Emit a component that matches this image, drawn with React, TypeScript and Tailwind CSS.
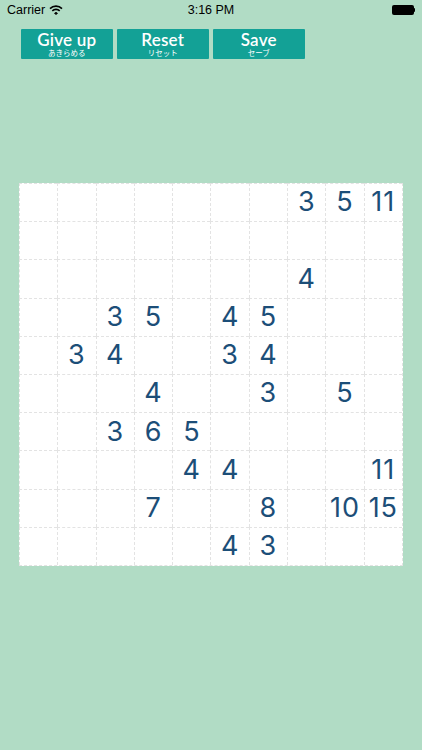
import React from "react";

const board: (number | null)[][] = [
  [null, null, null, null, null, null, null, 3, 5, 11],
  [null, null, null, null, null, null, null, null, null, null],
  [null, null, null, null, null, null, null, 4, null, null],
  [null, null, 3, 5, null, 4, 5, null, null, null],
  [null, 3, 4, null, null, 3, 4, null, null, null],
  [null, null, null, 4, null, null, 3, null, 5, null],
  [null, null, 3, 6, 5, null, null, null, null, null],
  [null, null, null, null, 4, 4, null, null, null, 11],
  [null, null, null, 7, null, null, 8, null, 10, 15],
  [null, null, null, null, null, 4, 3, null, null, null],
];

const buttons = [
  { label: "Give up", sub: "あきらめる" },
  { label: "Reset", sub: "リセット" },
  { label: "Save", sub: "セーブ" },
];

function StatusBar() {
  return (
    <div className="relative flex h-[20px] items-center px-[7px] text-[12.5px] text-black">
      <div className="flex items-center gap-[4px]">
        <span>Carrier</span>
        <svg width="14" height="10" viewBox="0 0 14 10">
          <path d="M1 3.6 A8.5 8.5 0 0 1 13 3.6" fill="none" stroke="#000" strokeWidth="1.6" />
          <path d="M3.3 5.9 A5.3 5.3 0 0 1 10.7 5.9" fill="none" stroke="#000" strokeWidth="1.6" />
          <path d="M5.6 8.2 A2 2 0 0 1 8.4 8.2 L7 9.6 Z" fill="#000" stroke="#000" strokeWidth="1" />
        </svg>
      </div>
      <div className="absolute left-1/2 -translate-x-1/2 font-medium">3:16 PM</div>
      <div className="ml-auto flex items-center">
        <div className="h-[10px] w-[22px] rounded-[2px] bg-black" />
        <div className="h-[4px] w-[1.5px] rounded-r-sm bg-black" />
      </div>
    </div>
  );
}

export default function App() {
  return (
    <div
      className="min-h-screen w-[422px] bg-[#b1dcc5]"
      style={{ fontFamily: "'Liberation Sans', 'Noto Sans CJK JP', sans-serif" }}
    >
      <StatusBar />

      {/* Action buttons */}
      <div className="mt-[9px] flex gap-[4.5px] pl-[21px]">
        {buttons.map((b) => (
          <button
            key={b.label}
            className="flex h-[30px] w-[91.5px] flex-col items-center justify-center rounded-[1px] bg-[#13a196] text-white"
          >
            <span
              className="text-[17px] leading-[17px] font-semibold tracking-[0.2px]"
              style={{ fontFamily: "Lato, 'Noto Sans', sans-serif" }}
            >
              {b.label}
            </span>
            <span className="mt-[1px] text-[7.5px] leading-[9px]">{b.sub}</span>
          </button>
        ))}
      </div>

      {/* Board */}
      <div className="ml-[19px] mt-[124px] grid h-[383px] w-[384px] grid-cols-10 grid-rows-10 border-r border-b border-dashed border-[#e3e3e3] bg-white">
        {board.flatMap((row, r) =>
          row.map((n, c) => (
            <div
              key={`${r}-${c}`}
              className="flex items-center justify-center overflow-visible border-l border-t border-dashed border-[#e3e3e3] text-[27px] font-normal text-[#1c4e78]"
              style={{ fontFamily: "Inter, 'Noto Sans', sans-serif" }}
            >
              {n !== null && <span className="whitespace-nowrap tracking-[1px]">{n}</span>}
            </div>
          ))
        )}
      </div>
    </div>
  );
}
